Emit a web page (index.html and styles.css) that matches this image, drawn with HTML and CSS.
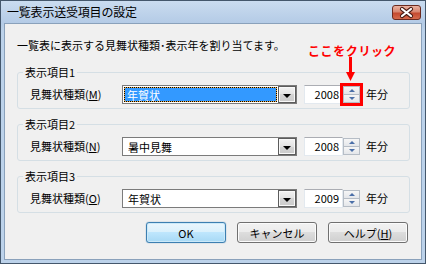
FILE: index.html
```html
<!DOCTYPE html>
<html lang="ja">
<head>
  <meta charset="UTF-8">
  <meta name="viewport" content="width=device-width, initial-scale=1">
  <title>一覧表示送受項目の設定</title>
  <link rel="stylesheet" href="styles.css">
</head>
<body>
  <div class="window">
    <div class="titlebar">
      <span class="title">一覧表示送受項目の設定</span>
      <span class="close">
        <svg width="29" height="15" viewBox="0 0 29 15">
          <path d="M10 4 L19 11 M19 4 L10 11" stroke="#4a1c14" stroke-width="4.2" stroke-linecap="round"/>
          <path d="M10 4 L19 11 M19 4 L10 11" stroke="#fff" stroke-width="2.2" stroke-linecap="round"/>
        </svg>
      </span>
    </div>

    <div class="client">
      <p class="intro">一覧表に表示する見舞状種類･表示年を割り当てます。</p>

      <!-- 注釈（赤文字と矢印） -->
      <div class="note">ここをクリック</div>
      <svg class="arrow" width="9" height="24" viewBox="0 0 9 24">
        <rect x="3" y="0" width="3" height="16" fill="#f00"/>
        <polygon points="0,15 9,15 4.5,24" fill="#f00"/>
      </svg>

      <fieldset class="group">
        <legend>表示項目1</legend>
        <div class="row">
          <span class="label">見舞状種類(<u>M</u>)</span>
          <div class="combo focused"><span class="value">年賀状</span><span class="drop"></span></div>
          <div class="spin">
            <span class="num">2008</span>
            <span class="arrows highlight"><span class="up"></span><span class="down"></span></span>
          </div>
          <span class="unit">年分</span>
        </div>
      </fieldset>

      <fieldset class="group">
        <legend>表示項目2</legend>
        <div class="row">
          <span class="label">見舞状種類(<u>N</u>)</span>
          <div class="combo"><span class="value">暑中見舞</span><span class="drop"></span></div>
          <div class="spin">
            <span class="num">2008</span>
            <span class="arrows"><span class="up"></span><span class="down"></span></span>
          </div>
          <span class="unit">年分</span>
        </div>
      </fieldset>

      <fieldset class="group">
        <legend>表示項目3</legend>
        <div class="row">
          <span class="label">見舞状種類(<u>O</u>)</span>
          <div class="combo"><span class="value">年賀状</span><span class="drop"></span></div>
          <div class="spin">
            <span class="num">2009</span>
            <span class="arrows"><span class="up"></span><span class="down"></span></span>
          </div>
          <span class="unit">年分</span>
        </div>
      </fieldset>

      <div class="buttons">
        <button type="button" class="default">OK</button>
        <button type="button">キャンセル</button>
        <button type="button">ヘルプ(<u>H</u>)</button>
      </div>
    </div>
  </div>
</body>
</html>
```

FILE: styles.css
```css
/* Reset */
* {
  box-sizing: border-box;
  margin: 0;
  padding: 0;
}
body {
  width: 426px;
  height: 264px;
  font-family: "Noto Sans CJK JP", "Noto Sans", sans-serif;
  font-size: 11px;
  line-height: 14px;
  color: #000;
  background: #fff;
  overflow: hidden;
}

/* Ventana */
.window {
  width: 426px;
  height: 264px;
  border: 1px solid #44576c;
  background: linear-gradient(#cadcf0, #b4cbe6 22px, #bcd2ea 30px, #bcd2ea);
  padding: 0 3px 3px;
  display: flex;
  flex-direction: column;
}
.titlebar {
  height: 22px;
  display: flex;
  align-items: center;
  justify-content: space-between;
  padding-left: 3px;
}
.title {
  font-size: 12px;
  letter-spacing: -0.2px;
}
.close {
  width: 29px;
  height: 15px;
  margin-right: 1px;
  margin-top: 1px;
  border: 1px solid #6b2a1f;
  border-radius: 3px;
  background: linear-gradient(#eab2a2, #d88670 45%, #c44a30 55%, #d66a4c);
  display: flex;
  overflow: hidden;
}
.close svg {
  margin: -1px;
}

.client {
  flex: 1;
  position: relative;
  background: #f0f0f0;
  border: 1px solid #8aa1bb;
  padding: 14px 11px 0 12px;
}
.intro {
  margin-bottom: 13px;
}

/* Anotación */
.note {
  position: absolute;
  left: 303px;
  top: 20px;
  color: #f00;
  font-size: 12px;
  font-weight: bold;
  letter-spacing: 0.6px;
}
.arrow {
  position: absolute;
  left: 341px;
  top: 33px;
}

/* Grupos */
.group {
  border: 1px solid #d5dfe5;
  border-radius: 3px;
  padding: 5px 12px 4px 12px;
  margin-bottom: 8px;
}
.group legend {
  padding: 0 2px;
  margin-left: -7px;
  line-height: 14px;
}
.row {
  display: flex;
  align-items: center;
  height: 20px;
}
.label {
  width: 92px;
}

.combo {
  width: 175px;
  height: 19px;
  border: 1px solid #7b7b7b;
  background: #fff;
  display: flex;
  padding: 1px;
  margin-right: 7px;
}
.combo .value {
  flex: 1;
  padding-left: 3px;
  line-height: 15px;
  border: 1px solid transparent;
}
.combo.focused .value {
  color: #fff;
  background: linear-gradient(#3399ff, #3399ff) padding-box, #f2b24a;
  border: 1px dotted #000;
  padding-left: 2px;
}
.drop {
  width: 18px;
  margin: -1px -1px -1px 1px;
  border: 1px solid #5c5c5c;
  background: linear-gradient(#f2f2f2, #e2e2e2 50%, #d4d4d4 50%, #cbcbcb);
  box-shadow: inset 0 0 0 1px #f8f8f8;
  position: relative;
}
.drop::after {
  content: "";
  position: absolute;
  left: 4px;
  top: 7px;
  border-left: 4px solid transparent;
  border-right: 4px solid transparent;
  border-top: 4px solid #000;
}

/* Spin */
.spin {
  display: flex;
  width: 56px;
  height: 19px;
  margin-right: 6px;
}
.num {
  flex: 1;
  background: #fff;
  border: 1px solid #e3e9ef;
  border-top-color: #abadb3;
  text-align: right;
  padding-right: 3px;
  line-height: 16px;
}
.arrows {
  width: 17px;
  display: flex;
  flex-direction: column;
  margin: 1px 0;
  border: 1px solid #b6bdc6;
  background: #f4f4f4;
}
.arrows.highlight {
  outline: 3px solid #f00;
}
.arrows span {
  flex: 1;
  position: relative;
  background: linear-gradient(#f6f6f6, #e4e6ea);
}
.arrows .down {
  border-top: 1px solid #b6bdc6;
}
.arrows .up::after,
.arrows .down::after {
  content: "";
  position: absolute;
  left: 5px;
  border-left: 3px solid transparent;
  border-right: 3px solid transparent;
}
.arrows .up::after {
  top: 2px;
  border-bottom: 3px solid #4b6fa8;
}
.arrows .down::after {
  top: 2px;
  border-top: 3px solid #4b6fa8;
}

/* Botones */
.buttons {
  display: flex;
  justify-content: flex-end;
  gap: 11px;
  margin-top: 9px;
  padding-right: 2px;
}
button {
  width: 80px;
  height: 21px;
  font-family: inherit;
  font-size: 11px;
  color: #000;
  border: 1px solid #707070;
  border-radius: 3px;
  background: linear-gradient(#f2f2f2, #ebebeb 50%, #dddddd 50%, #cfcfcf);
  box-shadow: inset 0 0 0 1px #fbfbfb;
}
button.default {
  border-color: #3c7fb1;
  background: linear-gradient(#eaf6fd, #d9f0fc 50%, #bee6fd 50%, #a7d9f5);
  box-shadow: inset 0 0 0 1px #cbe9f9, 0 0 1px #3c7fb1;
}
```
